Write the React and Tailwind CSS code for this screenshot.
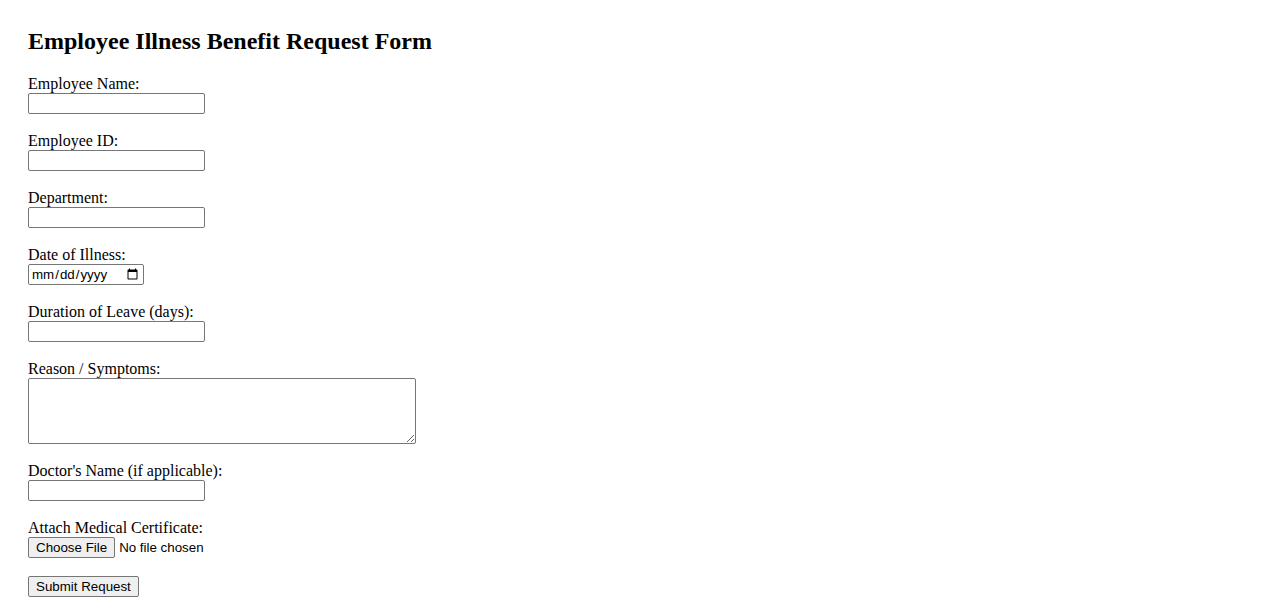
const serif = "font-['Liberation_Serif','Times_New_Roman',serif]";
const sans = "font-['Liberation_Sans',Arial,sans-serif]";
const inputCls = `block w-[177px] h-[21px] border border-[#767676] rounded-[2px] px-[2px] py-[1px] bg-white text-[13.33px] leading-[15px] text-black ${sans}`;
const buttonCls = `inline-flex items-center h-[21px] px-[7px] border border-[#767676] rounded-[2px] bg-[#efefef] text-[13.33px] leading-[15px] text-black ${sans}`;

function Field({ label, children, last }) {
  return (
    <div className={last ? "flex flex-col" : "flex flex-col mb-[18px]"}>
      <label className="block h-[18px] text-[16px] leading-[18px]">{label}</label>
      {children}
    </div>
  );
}

export default function App() {
  const textFields = [
    { id: "name", label: "Employee Name:" },
    { id: "empid", label: "Employee ID:" },
    { id: "dept", label: "Department:" },
  ];

  return (
    <div className={`min-h-screen bg-white text-black ${serif} px-[28px] pt-[28px]`}>
      <h2 className="text-[24px] leading-[27px] font-bold mb-[20px]">
        Employee Illness Benefit Request Form
      </h2>
      <form className="flex flex-col items-start" onSubmit={(e) => e.preventDefault()}>
        {textFields.map((f) => (
          <Field key={f.id} label={f.label}>
            <input type="text" className={inputCls} />
          </Field>
        ))}

        <Field label="Date of Illness:">
          <input
            type="date"
            className={`block w-[116px] h-[21px] border border-[#767676] rounded-[2px] pl-[2px] pr-[2px] bg-white text-[13.33px] leading-[15px] text-black ${sans}`}
          />
        </Field>

        <Field label="Duration of Leave (days):">
          <input type="number" className={inputCls} />
        </Field>

        <Field label="Reason / Symptoms:">
          <textarea
            className={`block w-[388px] h-[66px] border border-[#767676] rounded-[2px] px-[2px] py-[1px] bg-white text-[13.33px] resize ${sans}`}
          />
        </Field>

        <Field label="Doctor's Name (if applicable):">
          <input type="text" className={inputCls} />
        </Field>

        <Field label="Attach Medical Certificate:">
          <div className={`flex items-center h-[21px] text-[13.33px] ${sans}`}>
            <span className={buttonCls}>Choose File</span>
            <span className="ml-[4px] leading-[15px]">No file chosen</span>
          </div>
        </Field>

        <button type="submit" className={buttonCls}>
          Submit Request
        </button>
      </form>
    </div>
  );
}
